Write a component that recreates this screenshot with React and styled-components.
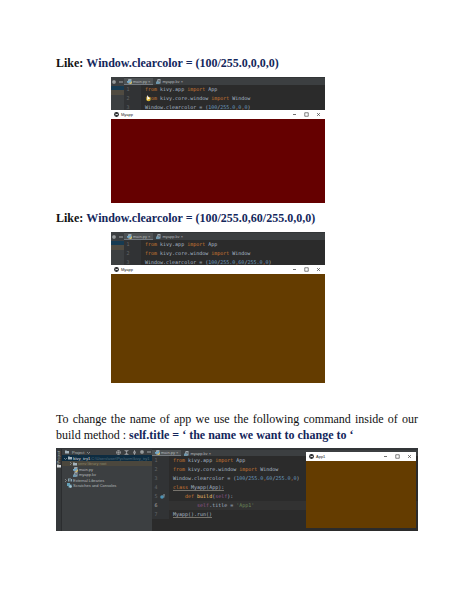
import React from 'react';
import styled, { createGlobalStyle } from 'styled-components';

const Global = createGlobalStyle`
  * { box-sizing: border-box; }
  body { margin: 0; background: #fff; }
  button {
    margin: 0; padding: 0; border: 0; background: none;
    font: inherit; color: inherit; display: flex; align-items: center;
  }
  svg { display: block; flex: none; }
`;

const Page = styled.main`
  padding: 54px 56px 80px;
  font-family: "Liberation Serif", serif;
  color: #111;
`;

const Heading = styled.h2`
  margin: 0;
  font-size: 12px;
  line-height: 18px;
  font-weight: bold;
  white-space: nowrap;
`;

const Navy = styled.strong`
  color: #14275c;
`;

const Paragraph = styled.p`
  margin: 28px 0 5px;
  font-size: 12px;
  line-height: 16px;
  text-align: justify;
`;

const Shot = styled.figure`
  margin: 5px 93px 6px 55px;
  background: #2b2b2b;
  font-family: "Liberation Sans", sans-serif;
  font-size: 4px;
  color: #b4b8ba;
`;

const Split = styled.div`
  display: grid;
  grid-template-columns: 13px minmax(0, 1fr);
  height: ${(p) => p.$height}px;
  overflow: hidden;
`;

const Tree = styled.div`
  background: #3c3f41;
`;

const TreeTools = styled.div`
  display: flex;
  align-items: center;
  justify-content: space-between;
  height: 9px;
  padding: 0 1px;
`;

const Strip = styled.div`
  height: ${(p) => p.$height}px;
  background: ${(p) => p.$color};
`;

const Editor = styled.div`
  min-width: 0;
  background: #2b2b2b;
  overflow: hidden;
`;

const Tabs = styled.div`
  display: flex;
  height: ${(p) => p.$height}px;
  background: #3c3f41;
  border-top: 1px solid #323537;
`;

const Tab = styled.button`
  gap: 1px;
  && { padding: 0 3px; }
  background: ${(p) => (p.$active ? '#4e5254' : 'transparent')};
  border-bottom: ${(p) => (p.$active ? '1px solid #747a80' : '0')};
  white-space: nowrap;
`;

const Code = styled.ol`
  margin: 0;
  padding: 0;
  list-style: none;
  font-family: "DejaVu Sans Mono", monospace;
  font-size: 5px;
  line-height: 9px;
  color: #a9b7c6;
`;

const Line = styled.li`
  display: grid;
  grid-template-columns: 8px 13px minmax(0, 1fr);
  align-items: center;
  height: 9px;
  white-space: pre;
  background: linear-gradient(90deg, #313335 17px, ${(p) => (p.$current ? '#323232' : '#2b2b2b')} 17px);
`;

const LineNo = styled.span`
  color: ${(p) => (p.$current ? '#a4a3a3' : '#64676a')};
  text-align: center;
`;

const Tok = styled.span`
  color: ${(p) => ({ kw: '#cc7832', num: '#6897bb', self: '#94558d', str: '#6a8759', fn: '#ffc66d' })[p.$t]};
`;

const Under = styled.span`
  border-bottom: 1px solid #77736c;
`;

const AppWindow = styled.section`
  background: ${(p) => p.$color};
`;

const TitleBar = styled.header`
  display: flex;
  align-items: center;
  gap: 2px;
  height: 9px;
  padding: 0 4px 0 3px;
  background: #fff;
  color: #222;
`;

const Title = styled.span`
  flex: 1;
`;

const WinButtons = styled.div`
  display: flex;
  gap: 7px;
`;

const Canvas = styled.div`
  height: ${(p) => p.$height}px;
`;

const Ide = styled.figure`
  position: relative;
  display: grid;
  grid-template-columns: 6px 90px minmax(0, 1fr);
  height: 83px;
  margin: 0;
  border-top: 1px solid #333639;
  background: #2b2b2b;
  font-family: "Liberation Sans", sans-serif;
  font-size: 4px;
  color: #b4b8ba;
  overflow: hidden;
`;

const Rail = styled.div`
  display: flex;
  flex-direction: column;
  align-items: center;
  gap: 1px;
  padding-top: 2px;
  background: #35383a;
  border-right: 1px solid #2b2d2f;
`;

const RailLabel = styled.span`
  writing-mode: vertical-rl;
  transform: rotate(180deg);
  line-height: 5px;
`;

const Project = styled.div`
  background: #3c3f41;
  overflow: hidden;
`;

const ProjectBar = styled.div`
  display: flex;
  align-items: center;
  gap: 3px;
  height: 6px;
  padding: 0 1px 0 3px;
`;

const Spacer = styled.span`
  flex: 1;
`;

const TreeRow = styled.div`
  display: flex;
  align-items: center;
  gap: 1px;
  height: ${(p) => (p.$tall ? 6 : 5)}px;
  padding-left: ${(p) => p.$indent}px;
  background: ${(p) => p.$bg || 'transparent'};
  white-space: nowrap;
`;

const Faint = styled.span`
  color: ${(p) => p.$color};
`;

const Floating = styled(AppWindow)`
  position: absolute;
  top: 3px;
  right: 2px;
  width: 110px;
`;

const Gear = () => (
  <svg width="4" height="4" viewBox="0 0 8 8">
    <circle cx="4" cy="4" r="2.3" fill="none" stroke="#c3c6c8" strokeWidth="1.8" />
    <path d="M4 0v8M0 4h8M1.2 1.2l5.6 5.6M6.8 1.2L1.2 6.8" stroke="#c3c6c8" strokeWidth=".8" />
    <circle cx="4" cy="4" r="1" fill="#3c3f41" />
  </svg>
);
const Dash = () => (
  <svg width="4" height="4" viewBox="0 0 8 8"><path d="M0 4h8" stroke="#b8bbbd" strokeWidth="1.6" /></svg>
);
const PyFile = () => (
  <svg width="5" height="5" viewBox="0 0 10 10">
    <path d="M3 0h6v9H2V2z" fill="#9ba4aa" />
    <path d="M0 6V4h5V2h3v4H4v2H1z" fill="#71a7c6" />
    <path d="M5 10V8h3V5h2v4H8v1z" fill="#d4bf62" />
  </svg>
);
const KvFile = () => (
  <svg width="5" height="5" viewBox="0 0 10 10">
    <path d="M4 0h5v9H2V2z" fill="#9ba4aa" />
    <path d="M0 5h7v5H0z" fill="#6c95aa" />
    <path d="M3 3h5M5 5h3" stroke="#464b4e" />
  </svg>
);
const Folder = ({ color = '#a5b4bd' }) => (
  <svg width="4" height="4" viewBox="0 0 8 8"><path d="M0 1h3l1 1h4v5H0z" fill={color} /></svg>
);
const Arrow = ({ down }) => (
  <svg width="3" height="3" viewBox="0 0 6 6">
    <path d={down ? 'M0 2l3 3 3-3' : 'M2 0l3 3-3 3'} fill="none" stroke="#a5a8aa" strokeWidth="1.3" />
  </svg>
);
const Kivy = () => (
  <svg width="5" height="5" viewBox="0 0 10 10">
    <circle cx="5" cy="5" r="4.8" fill="#202326" />
    <path d="M3 3l4 2-4 2zM6 3l2 2-2 2" fill="#e8e8e8" />
  </svg>
);
const Target = () => (
  <svg width="5" height="5" viewBox="0 0 10 10">
    <circle cx="5" cy="5" r="4" fill="none" stroke="#b8bbbd" strokeWidth="1.2" />
    <path d="M5 1v8M1 5h8" stroke="#b8bbbd" />
  </svg>
);
const Collapse = ({ flip }) => (
  <svg width="5" height="5" viewBox="0 0 10 10">
    <path d={flip ? 'M2 5h6M5 0v4M5 10V6M3 2l2 2 2-2M3 8l2-2 2 2' : 'M1 1h8M1 9h8M5 2v6M3 4l2-2 2 2M3 6l2 2 2-2'} fill="none" stroke="#b8bbbd" strokeWidth="1.2" />
  </svg>
);
const Scratch = () => (
  <svg width="5" height="5" viewBox="0 0 10 10">
    <path d="M0 0h6v3h3v6H3V6H0z" fill="#639eb5" /><circle cx="7" cy="7" r="2.5" fill="#a9c4cf" />
  </svg>
);
const Bars = () => (
  <svg width="4" height="4" viewBox="0 0 8 8">
    <path d="M0 1h2v6H0zM3 0h2v7H3zM6 2h2v5H6z" fill="#86a3b0" />
  </svg>
);
const Override = () => (
  <svg width="5" height="5" viewBox="0 0 10 10">
    <circle cx="4" cy="6" r="3.6" fill="#4b91b5" />
    <path d="M8 7V1M6 3l2-2 2 2" fill="none" stroke="#b4c7d0" strokeWidth="1.2" />
  </svg>
);
const Pointer = () => (
  <svg width="5" height="7" viewBox="0 0 10 14">
    <circle cx="5" cy="8" r="4.5" fill="#d9b52e" /><path d="M2 0l6 8H5L3 11z" fill="#fff" />
  </svg>
);

const Pointed = styled.span`
  position: relative;
`;

const PointerSpot = styled.span`
  position: absolute;
  top: 0;
  left: 1px;
`;

function WindowBar({ title }) {
  return (
    <TitleBar>
      <Kivy />
      <Title>{title}</Title>
      <WinButtons>
        <button aria-label="Minimize"><svg width="5" height="5" viewBox="0 0 10 10"><path d="M2 5h6" stroke="#333" strokeWidth="1.4" /></svg></button>
        <button aria-label="Maximize"><svg width="5" height="5" viewBox="0 0 10 10"><path d="M1.5 1.5h7v7h-7z" fill="none" stroke="#333" strokeWidth="1.2" /></svg></button>
        <button aria-label="Close"><svg width="5" height="5" viewBox="0 0 10 10"><path d="M2 2l6 6M8 2L2 8" stroke="#333" strokeWidth="1.2" /></svg></button>
      </WinButtons>
    </TitleBar>
  );
}

function EditorTabs({ height }) {
  return (
    <Tabs $height={height}>
      <Tab $active><PyFile />main.py ×</Tab>
      <Tab><KvFile />myapp.kv ×</Tab>
    </Tabs>
  );
}

const importApp = <><Tok $t="kw">from</Tok> kivy.app <Tok $t="kw">import</Tok> App</>;
const importWindow = <><Tok $t="kw">from</Tok> kivy.core.window <Tok $t="kw">import</Tok> Window</>;
const clearShort = <>Window.clearcolor = (<Tok $t="num">100</Tok>/<Tok $t="num">255.0</Tok><Tok $t="kw">,</Tok><Tok $t="num">0</Tok><Tok $t="kw">,</Tok><Tok $t="num">0</Tok>)</>;
const clearLong = <>Window.clearcolor = (<Tok $t="num">100</Tok>/<Tok $t="num">255.0</Tok><Tok $t="kw">,</Tok><Tok $t="num">60</Tok>/<Tok $t="num">255.0</Tok><Tok $t="kw">,</Tok><Tok $t="num">0</Tok>)</>;

function Listing({ lines, current, marks = {} }) {
  return (
    <Code>
      {lines.map((line, i) => (
        <Line key={i} $current={current === i + 1}>
          <LineNo $current={current === i + 1}>{i + 1}</LineNo>
          <span>{marks[i + 1]}</span>
          <span>{line}</span>
        </Line>
      ))}
    </Code>
  );
}

function Demo({ lines, color, height }) {
  return (
    <Shot>
      <Split $height={33}>
        <Tree>
          <TreeTools><Gear /><Dash /></TreeTools>
          <Strip $height={4} $color="#173b52" />
          <Strip $height={5} $color="#504b41" />
        </Tree>
        <Editor>
          <EditorTabs height={8} />
          <Listing lines={lines} />
        </Editor>
      </Split>
      <AppWindow $color={color}>
        <WindowBar title="Myapp" />
        <Canvas $height={height} />
      </AppWindow>
    </Shot>
  );
}

export default function App() {
  return (
    <>
      <Global />
      <Page>
        <Heading>Like: <Navy>Window.clearcolor = (100/255.0,0,0,0)</Navy></Heading>
        <Demo
          lines={[
            importApp,
            <Pointed>{importWindow}<PointerSpot><Pointer /></PointerSpot></Pointed>,
            clearShort,
          ]}
          color="#650000"
          height={84}
        />
        <Heading>Like: <Navy>Window.clearcolor = (100/255.0,60/255.0,0,0)</Navy></Heading>
        <Demo lines={[importApp, importWindow, clearLong]} color="#643c00" height={109} />
        <Paragraph>
          To change the name of app we use the following command inside of our build
          method : <Navy>self.title = ‘ the name we want to change to ‘</Navy>
        </Paragraph>
        <Ide>
          <Rail><RailLabel>Project</RailLabel><Folder color="#d5d8da" /></Rail>
          <Project>
            <ProjectBar>
              <Folder /><span>Project</span><Arrow down /><Spacer />
              <Target /><Collapse /><Collapse flip /><Gear /><Dash />
            </ProjectBar>
            <TreeRow $tall $indent={2} $bg="#0d2c41"><Arrow down /><Folder /><b>kivy_try1</b><Faint $color="#536c7b">C:\Users\user\Pycharm\kivy_try1</Faint></TreeRow>
            <TreeRow $indent={7} $bg="#4b473d"><Arrow /><Folder /><Faint $color="#8b8668">venv library root</Faint></TreeRow>
            <TreeRow $tall $indent={11}><PyFile />main.py</TreeRow>
            <TreeRow $indent={11}><KvFile />myapp.kv</TreeRow>
            <TreeRow $tall $indent={2}><Arrow /><Bars />External Libraries</TreeRow>
            <TreeRow $indent={5}><Scratch />Scratches and Consoles</TreeRow>
          </Project>
          <Editor>
            <EditorTabs height={7} />
            <Listing
              current={6}
              marks={{ 5: <Override /> }}
              lines={[
                importApp,
                importWindow,
                clearLong,
                <Under><Tok $t="kw">class</Tok> Myapp(App):</Under>,
                <>    <Tok $t="kw">def</Tok> <Tok $t="fn">build</Tok>(<Tok $t="self">self</Tok>):</>,
                <>        <Tok $t="self">self</Tok>.title = <Tok $t="str">'App1'</Tok></>,
                <Under>Myapp().run()</Under>,
              ]}
            />
          </Editor>
          <Floating $color="#643c00">
            <WindowBar title="App1" />
            <Canvas $height={67} />
          </Floating>
        </Ide>
      </Page>
    </>
  );
}
